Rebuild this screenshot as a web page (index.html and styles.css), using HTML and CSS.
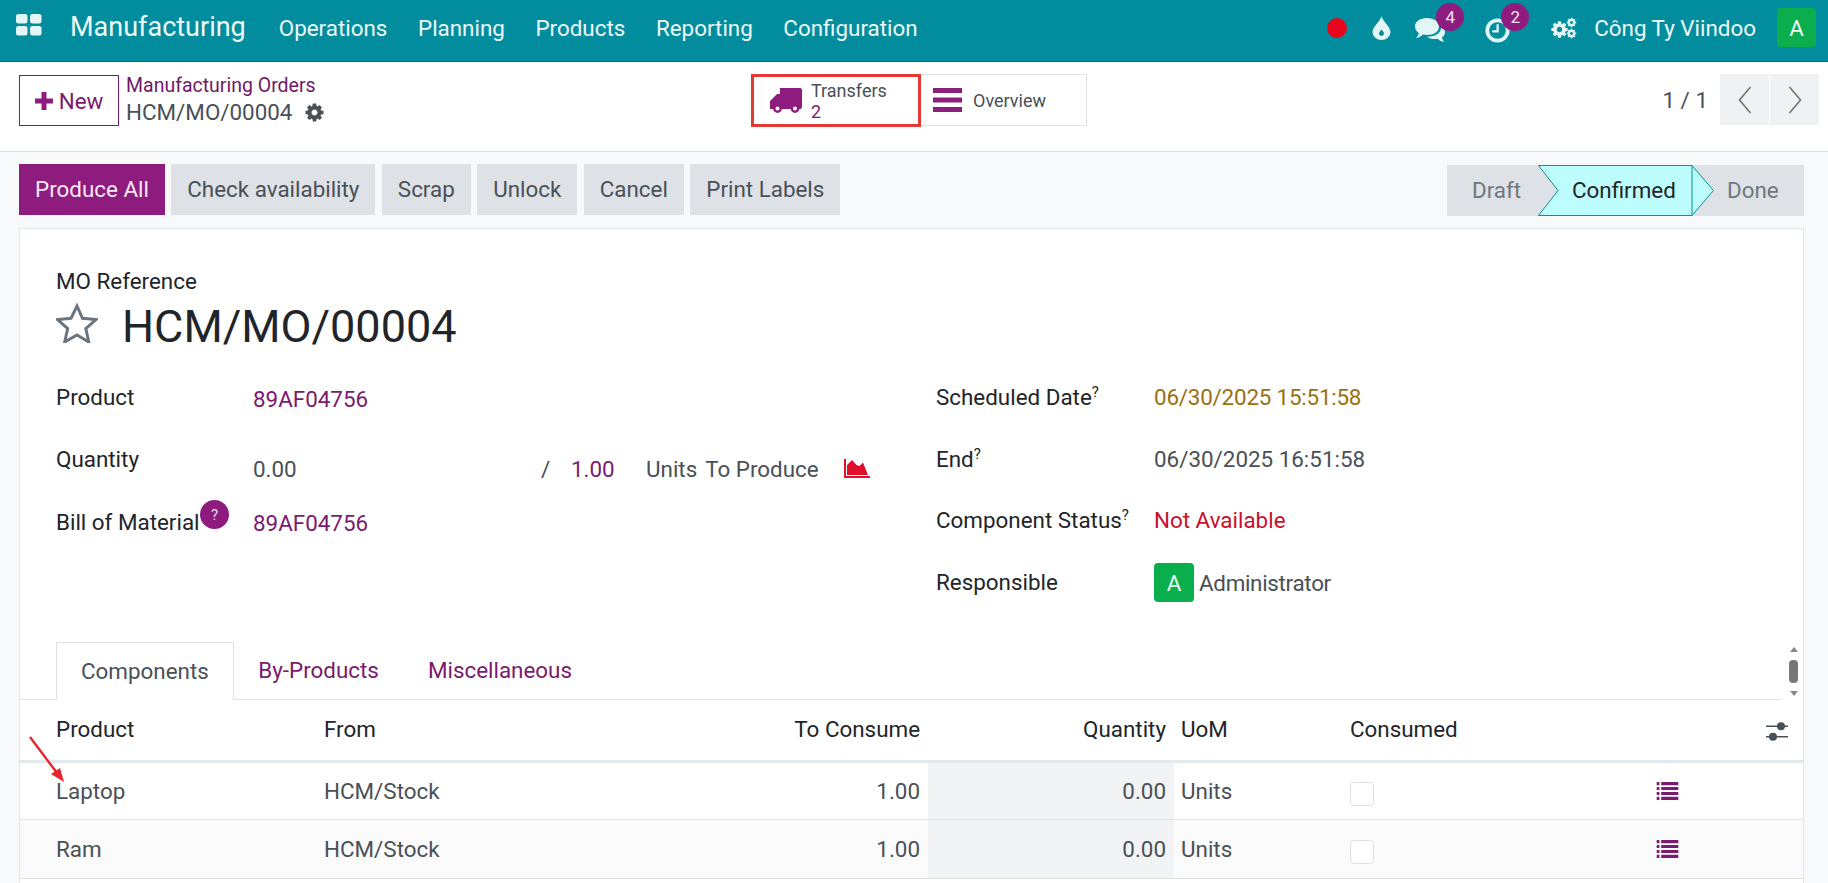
FILE: index.html
```html
<!DOCTYPE html>
<html lang="en">
<head>
  <meta charset="UTF-8">
  <title>HCM/MO/00004 - Manufacturing</title>
  <link rel="stylesheet" href="styles.css">
</head>
<body>

<svg width="0" height="0" class="defs">
  <symbol id="cog" viewBox="0 0 1792 1792">
    <path fill-rule="evenodd" d="M1152 896q0-106-75-181t-181-75-181 75-75 181 75 181 181 75 181-75 75-181zm512-109v222q0 12-8 23t-20 13l-185 28q-19 54-39 91 35 50 107 138 10 12 10 25t-9 23q-27 37-99 108t-94 71q-12 0-26-9l-138-108q-44 23-91 38-16 136-29 186-7 28-36 28h-222q-14 0-24.500-8.500t-11.500-21.500l-28-184q-49-16-90-37l-141 107q-10 9-25 9-14 0-25-11-126-114-165-168-7-10-7-23 0-12 8-23 15-21 51-66.500t54-70.500q-27-50-41-99l-183-27q-13-2-21-12.500t-8-23.500v-222q0-12 8-23t19-13l186-28q14-46 39-92-40-57-107-138-10-12-10-24 0-10 9-23 26-36 98.500-107.500t94.500-71.500q13 0 26 10l138 107q44-23 91-38 16-136 29-186 7-28 36-28h222q14 0 24.500 8.500t11.500 21.500l28 184q49 16 90 37l142-107q9-9 24-9 13 0 25 10 129 119 165 170 7 8 7 22 0 12-8 23-15 21-51 66.500t-54 70.500q26 50 41 98l183 28q13 2 21 12.500t8 23.500z"/>
  </symbol>
  <symbol id="list" viewBox="0 0 24 20">
    <path d="M0 0h3v3.500H0zM5 0h19v3.500H5zM0 5.500h3V9H0zM5 5.500h19V9H5zM0 11h3v3.500H0zM5 11h19v3.500H5zM0 16.500h3V20H0zM5 16.500h19V20H5z"/>
  </symbol>
</svg>

<header class="topbar">
  <svg class="apps-icon" viewBox="0 0 26 22">
    <rect x="0" y="0" width="11.500" height="9.500" rx="2.500"/>
    <rect x="14" y="0" width="11.500" height="9.500" rx="2.500"/>
    <rect x="0" y="12" width="11.500" height="9.500" rx="2.500"/>
    <rect x="14" y="12" width="11.500" height="9.500" rx="2.500"/>
  </svg>
  <span class="brand">Manufacturing</span>
  <nav class="menu">
    <a>Operations</a>
    <a>Planning</a>
    <a>Products</a>
    <a>Reporting</a>
    <a>Configuration</a>
  </nav>
  <div class="systray">
    <span class="rec-dot"></span>
    <svg class="drop-icon" viewBox="0 0 18 24">
      <path fill-rule="evenodd" d="M9 0C10 5 18 11 18 16a9 8 0 0 1-18 0C0 11 8 5 9 0zM9 13.500c-1 1.500-2.500 2.500-2.500 4a2.500 2.500 0 0 0 5 0c0-1.500-1.500-2.500-2.500-4z"/>
    </svg>
    <span class="tray-item chat">
      <svg class="chat-icon" viewBox="0 0 30 26">
        <path d="M12 0c7 0 12 3.500 12 8.500S19 17 12 17c-1.500 0-3-.2-4-.5C6 18.500 4 19.500 1 20c1.500-1.500 2.500-3 2.800-5C1.500 13.500 0 11.200 0 8.500 0 3.500 5 0 12 0z"/>
        <path d="M26 8c2.500 1.500 4 3.500 4 6 0 2-1 4-3 5.200.2 1.800 1 3.300 2.500 4.800-3-.3-5-1.300-6.800-3.200-4.200.8-8 0-10.700-2C20 19 27 15 26 8z"/>
      </svg>
      <span class="badge">4</span>
    </span>
    <span class="tray-item clock">
      <svg class="clock-icon" viewBox="0 0 24 24">
        <circle cx="12" cy="12" r="9.800" fill="none" stroke="currentColor" stroke-width="3.600"/>
        <path d="M11 6h2.200v8H7v-2.200h4z"/>
      </svg>
      <span class="badge">2</span>
    </span>
    <svg class="gears-icon" viewBox="0 0 26 22">
      <use href="#cog" x="-1" y="3" width="19" height="19"/>
      <use href="#cog" x="15" y="0" width="11" height="11"/>
      <use href="#cog" x="15" y="11" width="11" height="11"/>
    </svg>
    <span class="company">Công Ty Viindoo</span>
    <span class="user-avatar">A</span>
  </div>
</header>

<section class="control-panel">
  <div class="cp-left">
    <button class="btn-new"><svg viewBox="0 0 16 16"><path d="M5.800 0h4.400v5.800H16v4.400h-5.800V16H5.800v-5.800H0V5.800h5.800z"/></svg>New</button>
    <div class="breadcrumb">
      <a>Manufacturing Orders</a>
      <div class="bc-current">HCM/MO/00004 <svg class="cog-small"><use href="#cog"/></svg></div>
    </div>
  </div>
  <div class="stat-buttons">
    <div class="stat highlighted">
      <svg class="truck-icon" viewBox="0 0 32 25">
        <path d="M10 0h20a2 2 0 0 1 2 2v17a2 2 0 0 1-2 2H0v-8l7-7h3V2a2 2 0 0 1 0-2z"/>
        <circle class="wheel" cx="7.500" cy="20.500" r="3.200"/>
        <circle class="wheel" cx="25" cy="20.500" r="3.200"/>
      </svg>
      <div class="stat-text"><span>Transfers</span><b>2</b></div>
    </div>
    <div class="stat">
      <svg class="bars-icon" viewBox="0 0 29 24"><path d="M0 0h29v5H0zM0 9.500h29v5H0zM0 19h29v5H0z"/></svg>
      <span>Overview</span>
    </div>
  </div>
  <div class="pager">
    <span class="pager-count">1 / 1</span>
    <button class="pager-btn"><svg viewBox="0 0 14 28"><path d="M12.500 1 1.500 14l11 13"/></svg></button>
    <button class="pager-btn"><svg viewBox="0 0 14 28"><path d="M1.500 1l11 13-11 13"/></svg></button>
  </div>
</section>

<section class="action-bar">
  <div class="actions">
    <button class="btn primary">Produce All</button>
    <button class="btn">Check availability</button>
    <button class="btn">Scrap</button>
    <button class="btn">Unlock</button>
    <button class="btn">Cancel</button>
    <button class="btn">Print Labels</button>
  </div>
  <div class="statusbar">
    <span class="step draft">Draft</span>
    <span class="step current">
      <svg viewBox="0 0 176 51">
        <path class="step-shape" d="M.5.500H154L175.500 25.500 154 50.500H.5L20 25.500z"/>
        <path class="step-shape" d="M154 .5v50"/>
      </svg>
      <em>Confirmed</em>
    </span>
    <span class="step done">Done</span>
  </div>
</section>

<main class="sheet">
  <div class="ref-label">MO Reference</div>
  <div class="title-row">
    <svg class="star-icon" viewBox="0 0 42 40"><path d="M21 3l5.500 12.300 13.500 1.300-10.200 9 3 13.400L21 32 8.700 39l3-13.400-10.200-9 13.500-1.300z"/></svg>
    <h1>HCM/MO/00004</h1>
  </div>

  <div class="form-groups">
    <div class="form-group left">
      <label>Product</label>
      <div class="val link nudge-s">89AF04756</div>
      <label>Quantity</label>
      <div class="val qty nudge-l">
        <span class="qty-done">0.00</span>
        <span class="qty-sep">/</span>
        <span class="link qty-target">1.00</span>
        <span>Units</span>
        <span class="qty-to">To Produce</span>
        <svg class="area-icon" viewBox="0 0 26 19">
          <path d="M3 6l5-5 4.500 5 3 1 3.500-3.500 5 12.500H3z"/>
          <path d="M0 0h2v17h24v2H0z"/>
        </svg>
      </div>
      <label class="bom">Bill of Material<span class="help-badge">?</span></label>
      <div class="val link nudge-s">89AF04756</div>
    </div>
    <div class="form-group right">
      <label>Scheduled Date<sup>?</sup></label>
      <div class="val date-warn">06/30/2025 15:51:58</div>
      <label>End<sup>?</sup></label>
      <div class="val">06/30/2025 16:51:58</div>
      <label>Component Status<sup>?</sup></label>
      <div class="val danger">Not Available</div>
      <label>Responsible</label>
      <div class="val person"><span class="person-avatar">A</span><span class="person-name">Administrator</span></div>
    </div>
  </div>

  <div class="tab-row">
    <div class="tabs">
      <a class="tab active">Components</a>
      <a class="tab">By-Products</a>
      <a class="tab">Miscellaneous</a>
    </div>
    <div class="scroller">
      <i class="arrow-up"></i>
      <i class="thumb"></i>
      <i class="arrow-down"></i>
    </div>
  </div>

  <table class="lines">
    <colgroup>
      <col class="c-product"><col class="c-from"><col class="c-consume"><col class="c-qty"><col class="c-uom"><col class="c-check"><col>
    </colgroup>
    <thead>
      <tr>
        <th>Product</th>
        <th>From</th>
        <th class="num">To Consume</th>
        <th class="num">Quantity</th>
        <th>UoM</th>
        <th>Consumed</th>
        <th class="opt"><svg class="sliders-icon" viewBox="0 0 22 19">
          <path d="M0 3.500h22v1.500H0zM0 14h22v1.500H0z"/>
          <circle cx="15" cy="4.200" r="4"/><circle cx="7" cy="14.800" r="4"/>
        </svg></th>
      </tr>
    </thead>
    <tbody>
      <tr class="first">
        <td>Laptop</td>
        <td>HCM/Stock</td>
        <td class="num">1.00</td>
        <td class="num shaded">0.00</td>
        <td>Units</td>
        <td><span class="checkbox"></span></td>
        <td><svg class="list-icon"><use href="#list"/></svg></td>
      </tr>
      <tr class="alt">
        <td>Ram</td>
        <td>HCM/Stock</td>
        <td class="num">1.00</td>
        <td class="num shaded">0.00</td>
        <td>Units</td>
        <td><span class="checkbox"></span></td>
        <td><svg class="list-icon"><use href="#list"/></svg></td>
      </tr>
    </tbody>
  </table>

  <svg class="red-arrow" viewBox="0 0 36 47">
    <path d="M1 1l27 36" stroke="#e5262c" stroke-width="2.400" fill="none"/>
    <path d="M35 46 22 38l9-6z" fill="#e5262c"/>
  </svg>
</main>

</body>
</html>
```
FILE: styles.css
```css
* {
  box-sizing: border-box;
}

html, body {
  height: 883px;
  overflow: hidden;
}

body {
  margin: 0;
  background-color: #f8f9fa;
  color: #495057;
  font-family: Roboto, "Liberation Sans", sans-serif;
  font-size: 22.4px;
}

.defs {
  position: absolute;
}

button {
  font: inherit;
  border: none;
  padding: 0;
}

/* top navbar */
.topbar {
  display: flex;
  align-items: center;
  height: 62px;
  padding: 0 12px 6px 16px;
  background-color: #018d9e;
  border-bottom: 1px solid #0a6a78;
  color: #eef9fa;
}

.apps-icon {
  width: 26px;
  height: 22px;
  fill: #e3f6f6;
  margin-bottom: 6px;
}

.brand {
  margin-left: 28px;
  font-size: 27px;
  margin-bottom: 1px;
}

.menu {
  display: flex;
  gap: 30.600px;
  margin-left: 33px;
}

.systray {
  display: flex;
  align-items: center;
  margin-left: auto;
}

.rec-dot {
  width: 20px;
  height: 20px;
  border-radius: 50%;
  background-color: #e8061c;
}

.drop-icon {
  width: 19px;
  height: 24px;
  fill: #e3f6f6;
  margin-left: 25px;
}

.tray-item {
  position: relative;
  display: flex;
}

.chat {
  margin-left: 24px;
}

.chat-icon {
  width: 30px;
  height: 26px;
  fill: #e3f6f6;
  margin-top: 6px;
}

.clock {
  margin-left: 40px;
  color: #e3f6f6;
}

.clock-icon {
  width: 25px;
  height: 25px;
  fill: currentColor;
  margin-top: 6px;
}

.badge {
  position: absolute;
  display: flex;
  align-items: center;
  justify-content: center;
  top: -9px;
  left: 21px;
  width: 28px;
  height: 28px;
  border-radius: 50%;
  background-color: #8e1c7e;
  color: #f3e3f1;
  font-size: 17px;
}

.clock .badge {
  left: 16px;
}

.gears-icon {
  width: 26px;
  height: 22px;
  fill: #e3f6f6;
  margin-left: 41px;
}

.company {
  margin-left: 17px;
}

.user-avatar {
  display: flex;
  align-items: center;
  justify-content: center;
  width: 39px;
  height: 39px;
  margin-left: 21px;
  border-radius: 4px;
  background-color: #0bae4c;
}

/* breadcrumb and stat buttons */
.control-panel {
  display: flex;
  align-items: flex-start;
  height: 90px;
  padding: 12px 9px 0 19px;
  background-color: #fff;
  border-bottom: 1px solid #dee2e6;
}

.cp-left {
  display: flex;
  width: 732px;
  margin-top: 1px;
}

.btn-new {
  display: flex;
  align-items: center;
  justify-content: center;
  gap: 6px;
  width: 100px;
  height: 51px;
  background-color: #fff;
  border: 1px solid #7a1a70;
  color: #7a1a70;
  font-weight: 400;
}

.btn-new svg {
  width: 18px;
  height: 18px;
  fill: #8e1c7e;
}

.breadcrumb {
  margin-left: 7px;
}

.breadcrumb a {
  display: block;
  font-size: 19.500px;
  color: #71196a;
  line-height: 22px;
}

.bc-current {
  display: flex;
  align-items: center;
  gap: 12px;
  height: 28px;
  margin-top: 1px;
}

.cog-small {
  width: 21px;
  height: 21px;
  fill: #495057;
}

.stat-buttons {
  display: flex;
  align-items: flex-start;
}

.stat {
  display: flex;
  align-items: center;
  gap: 11px;
  width: 166px;
  height: 52px;
  padding-left: 12px;
  background-color: #fff;
  border: 1px solid #dee2e6;
  border-left: none;
  font-size: 18px;
}

.stat.highlighted {
  width: 170px;
  height: 53px;
  gap: 9px;
  padding-left: 16px;
  border: 3px solid #e53935;
}

.stat-text {
  display: flex;
  flex-direction: column;
  line-height: 21px;
  padding-top: 1px;
}

.stat-text b {
  font-weight: 400;
  color: #7a1a70;
}

.truck-icon {
  width: 32px;
  height: 25px;
  fill: #8e1c7e;
}

.wheel {
  fill: #fff;
  stroke: #8e1c7e;
  stroke-width: 2.400;
}

.bars-icon {
  width: 29px;
  height: 24px;
  fill: #8a1f7c;
}

.pager {
  display: flex;
  align-items: center;
  margin-left: auto;
}

.pager-count {
  margin-right: 11px;
}

.pager-btn {
  display: flex;
  align-items: center;
  justify-content: center;
  width: 49px;
  height: 51px;
  margin-left: 1px;
  background-color: #f0f1f2;
}

.pager-btn svg {
  width: 14px;
  height: 28px;
  fill: none;
  stroke: #6c757d;
  stroke-width: 1.600;
}

/* action buttons and status */
.action-bar {
  display: flex;
  justify-content: space-between;
  height: 76px;
  padding: 12px 24px 0 19px;
}

.actions {
  display: flex;
  gap: 6.400px;
}

.btn {
  height: 51px;
  padding: 0 16px 2px;
  background-color: #dee2e6;
  color: #495057;
}

.btn.primary {
  background-color: #8e1c7e;
  color: #f6e9f4;
}

.statusbar {
  display: flex;
  align-items: center;
  width: 357px;
  height: 51px;
  margin-top: 1px;
  background-color: #dee2e6;
  color: #6f777e;
}

.step.draft {
  margin-left: 25px;
  width: 66px;
  padding-bottom: 2px;
}

.step.current {
  position: relative;
  display: flex;
  align-items: center;
  width: 176px;
  height: 51px;
  color: #212529;
}

.step.current svg {
  position: absolute;
  inset: 0;
  width: 176px;
  height: 51px;
}

.step.current em {
  position: relative;
  font-style: normal;
  margin-left: 34px;
  padding-bottom: 2px;
}

.step-shape {
  fill: #bdfdfd;
  stroke: #0a8f9b;
  stroke-width: 1;
}

.step.done {
  margin-left: 13px;
  padding-bottom: 2px;
}

/* form sheet */
.sheet {
  position: relative;
  height: 655px;
  margin: 0 24px 0 19px;
  background-color: #fff;
  border: 1px solid #e2e5e8;
  border-bottom: none;
}

.ref-label {
  margin: 40px 0 0 36px;
  line-height: 24px;
  color: #212529;
}

.title-row {
  display: flex;
  align-items: center;
  gap: 24px;
  height: 44px;
  margin: 11px 0 0 36px;
}

.star-icon {
  width: 42px;
  height: 40px;
  margin-bottom: 7px;
  fill: none;
  stroke: #6c757d;
  stroke-width: 3;
}

h1 {
  margin: 0;
  font-size: 45px;
  font-weight: 400;
  color: #212529;
}

.form-groups {
  display: flex;
  margin: 35px 0 0 36px;
  height: 259px;
}

.form-group {
  display: grid;
  grid-auto-rows: 61.600px;
  align-items: start;
}

.form-group.left {
  grid-template-columns: 197px 623px;
  width: 880px;
}

.form-group.right {
  grid-template-columns: 218px 1fr;
}

.form-group label {
  color: #212529;
  line-height: 28px;
}

.form-group sup {
  font-size: 15px;
  line-height: 0;
}

.val {
  line-height: 28px;
}

.link {
  color: #7a1a70;
}

.nudge-s {
  margin-top: 2px;
}

.bom + .nudge-s {
  margin-top: 3px;
}

.nudge-l {
  margin-top: 10px;
}

.qty {
  display: flex;
  align-items: center;
}

.qty-done {
  width: 288px;
}

.qty-sep {
  width: 30px;
}

.qty-target {
  width: 75px;
}

.qty-to {
  margin-left: 8px;
}

.area-icon {
  width: 26px;
  height: 19px;
  fill: #e0102a;
  margin-left: 25px;
}

.bom {
  position: relative;
  margin-top: 2px;
}

.help-badge {
  position: absolute;
  left: 144px;
  top: -8px;
  display: flex;
  align-items: center;
  justify-content: center;
  width: 29px;
  height: 29px;
  border-radius: 50%;
  background-color: #8e1c7e;
  color: #f0dcee;
  font-size: 15px;
}

.date-warn {
  color: #9a7010;
  letter-spacing: -0.200px;
}

.danger {
  color: #c8102e;
}

.person {
  display: flex;
  align-items: center;
  gap: 5px;
  margin-top: -5px;
  height: 40px;
}

.person-name {
  letter-spacing: -0.300px;
}

.person-avatar {
  display: flex;
  align-items: center;
  justify-content: center;
  width: 40px;
  height: 39px;
  border-radius: 4px;
  background-color: #0bae4c;
  color: #e9f8ef;
}

/* notebook */
.tab-row {
  display: flex;
  height: 58px;
}

.tabs {
  display: flex;
  flex: 1;
  padding-left: 36px;
  border-bottom: 1px solid #dee2e6;
}

.tab {
  display: flex;
  align-items: center;
  height: 58px;
  padding: 0 24.500px 2px;
  color: #7a1a70;
}

.tab.active {
  padding: 0 24px 2px;
  color: #495057;
  background-color: #fff;
  border: 1px solid #dee2e6;
  border-bottom: none;
}

.scroller {
  display: flex;
  flex-direction: column;
  align-items: center;
  width: 15px;
  padding-top: 5px;
  margin: 0 2px 0 4px;
  gap: 8px;
}

.thumb {
  width: 9px;
  height: 23px;
  border-radius: 4px;
  background-color: #777;
}

.arrow-up, .arrow-down {
  width: 0;
  height: 0;
  border-left: 4px solid transparent;
  border-right: 4px solid transparent;
}

.arrow-up {
  border-bottom: 5px solid #888;
}

.arrow-down {
  border-top: 5px solid #888;
}

.lines {
  width: 100%;
  table-layout: fixed;
  border-collapse: collapse;
}

.c-product { width: 297px; }
.c-from { width: 283px; }
.c-consume { width: 328px; }
.c-qty { width: 246px; }
.c-uom { width: 169px; }
.c-check { width: 306px; }

.lines th, .lines td {
  padding: 0 7px;
  text-align: left;
  font-weight: 400;
}

.lines th:first-child, .lines td:first-child {
  padding-left: 36px;
}

.lines th {
  height: 61px;
  padding-bottom: 1px;
  color: #212529;
  border-bottom: 3px solid #e3e8ec;
}

.lines td {
  height: 59px;
  border-bottom: 1px solid #dee2e6;
}

.lines .first td {
  height: 58px;
}

.lines .alt td {
  background-color: #fbfbfb;
}

.lines .num {
  text-align: right;
  padding-right: 8px;
}

.lines td.shaded {
  background-color: #f2f3f4;
}

.lines th.opt {
  text-align: right;
  padding-right: 15px;
}

.sliders-icon {
  width: 22px;
  height: 19px;
  fill: #495057;
  vertical-align: middle;
}

.checkbox {
  display: block;
  width: 24px;
  height: 24px;
  margin-top: 7px;
  border: 1px solid #dee2e6;
  border-radius: 4px;
  background-color: #fff;
}

.list-icon {
  display: block;
  width: 23px;
  height: 18px;
  fill: #7a1a70;
}

.red-arrow {
  position: absolute;
  left: 9px;
  top: 507px;
  width: 36px;
  height: 47px;
}
```
